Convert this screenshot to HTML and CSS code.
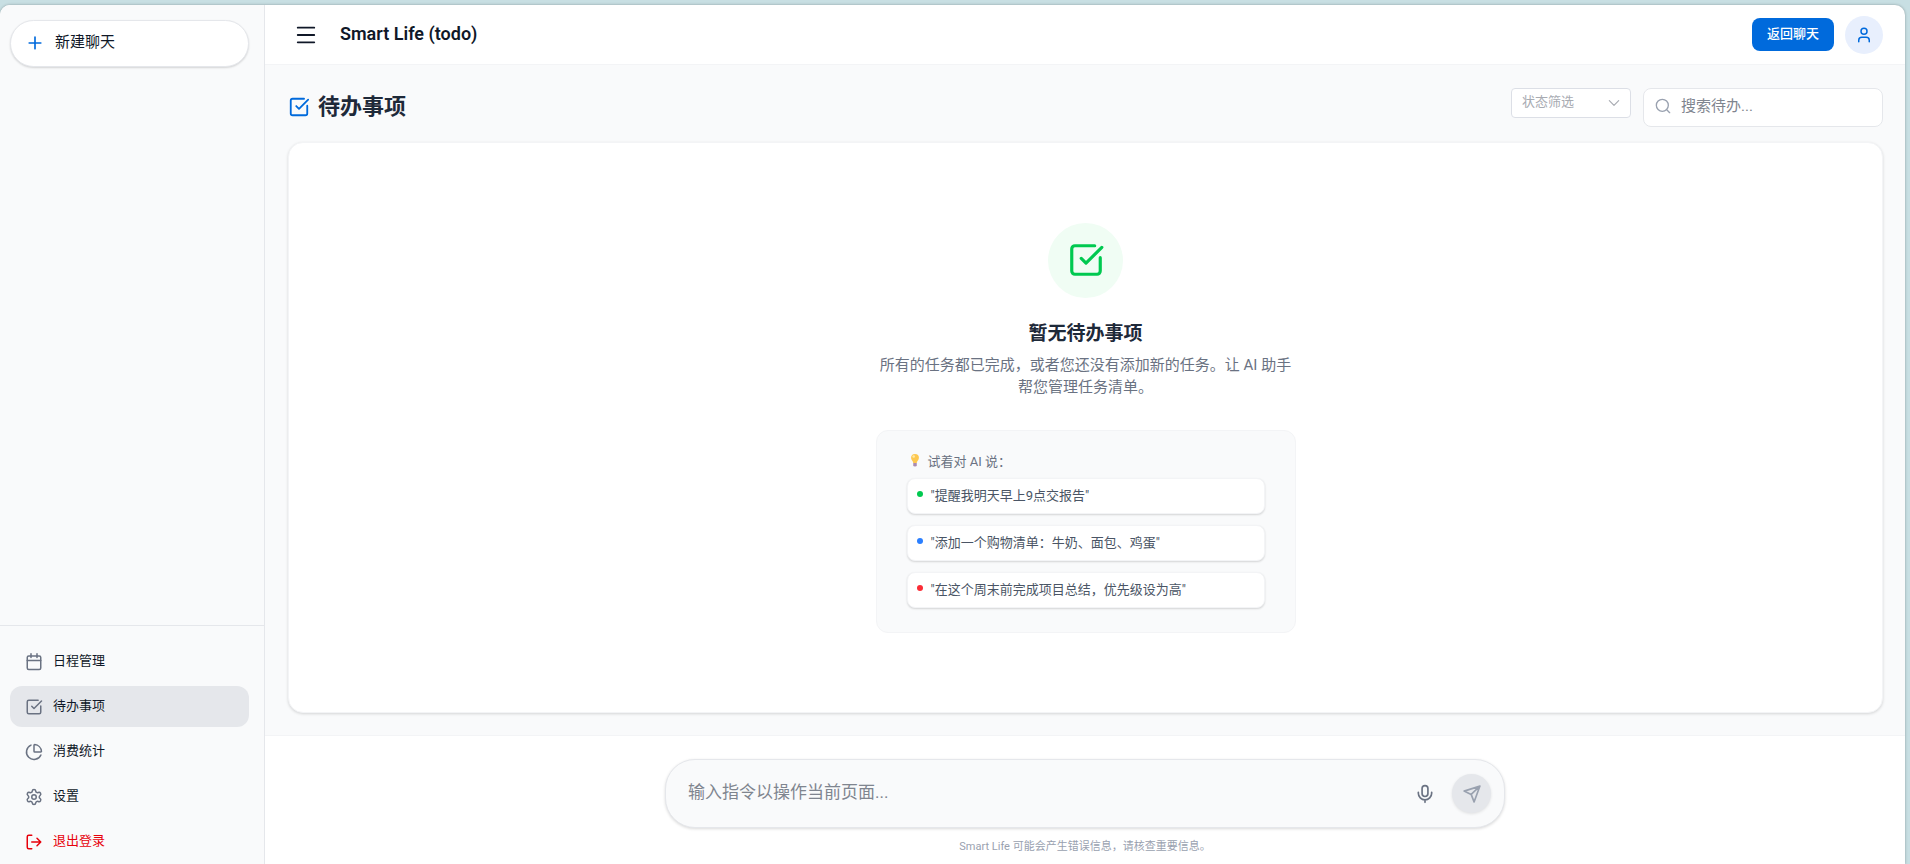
FILE: index.html
```
<!DOCTYPE html>
<html lang="zh-CN">
<head>
  <meta charset="UTF-8" />
  <meta name="viewport" content="width=device-width, initial-scale=1.0" />
  <title>Smart Life</title>
  <link rel="stylesheet" href="styles.css">
</head>
<body>
  <!-- Shared icon shapes -->
  <svg class="icon-defs" aria-hidden="true">
    <symbol id="icon-todo" viewBox="0 0 24 24">
      <path d="M21 10.5V19a2 2 0 0 1-2 2H5a2 2 0 0 1-2-2V5a2 2 0 0 1 2-2h12.5" />
      <path d="m9 11 3 3L22 4" />
    </symbol>
  </svg>

  <div class="app">
    <aside class="sidebar">
      <button type="button" class="new-chat">
        <svg class="icon icon-md" viewBox="0 0 24 24"><path d="M5 12h14M12 5v14" /></svg>
        <span>新建聊天</span>
      </button>

      <nav class="side-nav">
        <a href="#" class="nav-item">
          <svg class="icon" viewBox="0 0 24 24"><path d="M8 1v5M16 1v5M3 10h18" /><rect x="3" y="4" width="18" height="18" rx="2" /></svg>
          <span>日程管理</span>
        </a>
        <a href="#" class="nav-item active">
          <svg class="icon"><use href="#icon-todo" /></svg>
          <span>待办事项</span>
        </a>
        <a href="#" class="nav-item">
          <svg class="icon" viewBox="0 0 24 24"><path d="M21 12c.55 0 1-.45.95-1a10 10 0 0 0-8.95-8.95c-.55-.05-1 .4-1 .95v8a1 1 0 0 0 1 1z" /><path d="M21.2 15.9A10 10 0 1 1 8 2.83" /></svg>
          <span>消费统计</span>
        </a>
        <a href="#" class="nav-item">
          <svg class="icon" viewBox="0 0 24 24"><path d="M9.67 4.14a2.34 2.34 0 0 1 4.66 0 2.34 2.34 0 0 0 3.32 1.91 2.34 2.34 0 0 1 2.33 4.04 2.34 2.34 0 0 0 0 3.82 2.34 2.34 0 0 1-2.33 4.04 2.34 2.34 0 0 0-3.32 1.91 2.34 2.34 0 0 1-4.66 0 2.34 2.34 0 0 0-3.32-1.91 2.34 2.34 0 0 1-2.33-4.04 2.34 2.34 0 0 0 0-3.82 2.34 2.34 0 0 1 2.33-4.04 2.34 2.34 0 0 0 3.32-1.91" /><circle cx="12" cy="12" r="3" /></svg>
          <span>设置</span>
        </a>
        <a href="#" class="nav-item logout">
          <svg class="icon" viewBox="0 0 24 24"><path d="M9 21H5a2 2 0 0 1-2-2V5a2 2 0 0 1 2-2h4M16 17l5-5-5-5M21 12H9" /></svg>
          <span>退出登录</span>
        </a>
      </nav>
    </aside>

    <main class="main">
      <header class="topbar">
        <button type="button" class="menu-btn" aria-label="菜单">
          <svg class="icon icon-lg" viewBox="0 0 24 24"><path d="M3 4h18M3 12h18M3 20h18" /></svg>
        </button>
        <h1>Smart Life (todo)</h1>
        <button type="button" class="back-btn">返回聊天</button>
        <button type="button" class="avatar" aria-label="用户">
          <svg class="icon" viewBox="0 0 24 24"><path d="M19 21v-2a4 4 0 0 0-4-4H9a4 4 0 0 0-4 4v2" /><circle cx="12" cy="7" r="4" /></svg>
        </button>
      </header>

      <section class="content">
        <div class="page-head">
          <svg class="icon icon-lg icon-page"><use href="#icon-todo" /></svg>
          <h2>待办事项</h2>
          <div class="filters">
            <div class="status-filter">
              <select aria-label="状态筛选">
                <option>状态筛选</option>
                <option>待完成</option>
                <option>已完成</option>
              </select>
              <svg class="icon icon-arrow" viewBox="0 0 24 24"><path d="m4 8 8 8 8-8" /></svg>
            </div>
            <label class="search">
              <svg class="icon" viewBox="0 0 24 24"><circle cx="11" cy="11" r="9" /><path d="m22 22-4-4" /></svg>
              <input type="text" placeholder="搜索待办..." aria-label="搜索待办" />
            </label>
          </div>
        </div>

        <div class="card">
          <div class="empty">
            <div class="empty-icon">
              <svg class="icon"><use href="#icon-todo" /></svg>
            </div>
            <h3>暂无待办事项</h3>
            <p class="empty-text">所有的任务都已完成，或者您还没有添加新的任务。让 AI 助手帮您管理任务清单。</p>

            <div class="tips">
              <p class="tips-title">
                <svg class="bulb" viewBox="0 0 16 16">
                  <path d="M8 1a4.500 4.500 0 0 0-4.500 4.500c0 2.500 2.200 3.500 2.500 6h4c.3-2.500 2.500-3.500 2.500-6A4.500 4.500 0 0 0 8 1z" fill="#fdc850" />
                  <circle cx="6.500" cy="4" r="1.500" fill="#ffe9a8" />
                  <path d="M6 11.500h4v2.500a2 1.500 0 0 1-4 0z" fill="#a98bb0" />
                </svg>
                试着对 AI 说：
              </p>
              <ul>
                <li class="green">"提醒我明天早上9点交报告"</li>
                <li class="blue">"添加一个购物清单：牛奶、面包、鸡蛋"</li>
                <li class="red">"在这个周末前完成项目总结，优先级设为高"</li>
              </ul>
            </div>
          </div>
        </div>
      </section>

      <footer class="composer-area">
        <form class="composer">
          <input type="text" placeholder="输入指令以操作当前页面..." aria-label="输入指令" />
          <button type="button" class="mic-btn" aria-label="语音输入">
            <svg class="icon icon-md" viewBox="0 0 24 24"><path d="M12 19v3M20 10v1a8 8 0 0 1-16 0v-1" /><rect x="8.500" y="2" width="7" height="13" rx="3.500" /></svg>
          </button>
          <button type="button" class="send-btn" aria-label="发送">
            <svg class="icon icon-md" viewBox="0 0 24 24"><path d="M21.500 2.500 2.500 8.500l8.500 4 3.500 9zM21.500 2.500 11 12.500" /></svg>
          </button>
        </form>
        <p class="disclaimer">Smart Life 可能会产生错误信息，请核查重要信息。</p>
      </footer>
    </main>
  </div>
</body>
</html>
```

FILE: styles.css
```
* {
  box-sizing: border-box;
}
body {
  margin: 0;
  height: 100vh;
  padding: 5px 5px 0 0;
  overflow: hidden;
  background-color: #c8dfe3;
  color: #101828;
  font-family: Roboto, "Noto Sans CJK SC", sans-serif;
  font-size: 14px;
}
h1, h2, h3, p, ul {
  margin: 0;
  padding: 0;
}
button, input, select {
  font: inherit;
  color: inherit;
}
button {
  display: flex;
  align-items: center;
  justify-content: center;
  padding: 0;
  border: none;
  cursor: pointer;
}
.icon-defs {
  display: none;
}
.icon {
  flex: none;
  width: 18px;
  height: 18px;
  fill: none;
  stroke: currentColor;
  stroke-width: 2;
  stroke-linecap: round;
  stroke-linejoin: round;
}
.icon-md {
  width: 20px;
  height: 20px;
}
.icon-lg {
  width: 22px;
  height: 22px;
}
.app {
  display: flex;
  height: 100%;
  overflow: hidden;
  background-color: #fff;
  border-radius: 10px 10px 0 0;
  box-shadow: 0 0 3px rgba(0, 0, 0, 0.3);
}

/* Sidebar */
.sidebar {
  display: flex;
  flex-direction: column;
  flex: none;
  width: 265px;
  background-color: #f9fafb;
  border-right: 1px solid #e5e7eb;
}
.new-chat {
  justify-content: flex-start;
  gap: 10px;
  height: 47px;
  margin: 15px 15px 0 10px;
  padding: 0 14px 2px;
  font-size: 15px;
  background-color: #fff;
  border: 1px solid #e5e7eb;
  border-radius: 24px;
  box-shadow: 0 1px 2px rgba(0, 0, 0, 0.15);
}
.new-chat .icon {
  color: #006adc;
}
.new-chat span,
.nav-item span {
  padding-bottom: 4px;
}
.side-nav {
  display: flex;
  flex-direction: column;
  gap: 4px;
  margin-top: auto;
  padding: 15px 15px 2px 10px;
  border-top: 1px solid #e5e7eb;
}
.nav-item {
  display: flex;
  align-items: center;
  gap: 10px;
  height: 41px;
  padding: 0 15px;
  font-size: 13px;
  color: #101828;
  text-decoration: none;
  border-radius: 12px;
}
.nav-item .icon {
  color: #6a7282;
}
.nav-item.active {
  background-color: #e5e7eb;
}
.nav-item.logout,
.nav-item.logout .icon {
  color: #e7000b;
}

/* Top bar */
.main {
  display: flex;
  flex-direction: column;
  flex: 1;
  min-width: 0;
}
.topbar {
  display: flex;
  align-items: center;
  flex: none;
  height: 60px;
  padding: 0 22px 0 30px;
  border-bottom: 1px solid #f3f4f6;
}
.menu-btn {
  background: none;
}
.topbar h1 {
  margin: 0 auto 0 23px;
  padding-bottom: 2px;
  font-size: 18px;
  font-weight: 600;
}
.back-btn {
  height: 33px;
  margin-right: 11px;
  padding: 0 15px 4px;
  font-size: 13px;
  font-weight: 500;
  color: #fff;
  background-color: #006adc;
  border-radius: 8px;
}
.avatar {
  width: 38px;
  height: 38px;
  color: #006adc;
  background-color: #e8effd;
  border-radius: 50%;
}

/* Page content */
.content {
  display: flex;
  flex-direction: column;
  flex: 1;
  padding: 22px 22px 22px 23px;
  background-color: #f9fafb;
}
.page-head {
  display: flex;
  align-items: center;
  gap: 8px;
  height: 40px;
  margin-bottom: 15px;
}
.icon-page {
  color: #006adc;
}
.page-head h2 {
  padding-bottom: 6px;
  font-size: 22px;
  font-weight: 700;
  color: #1e2939;
}
.filters {
  display: flex;
  align-items: flex-start;
  gap: 12px;
  margin-left: auto;
}
.status-filter {
  display: grid;
  align-items: center;
  width: 120px;
  height: 30px;
}
.status-filter select,
.status-filter .icon {
  grid-area: 1 / 1;
}
.status-filter select {
  width: 100%;
  height: 30px;
  padding: 0 10px 2px;
  appearance: none;
  font-size: 13px;
  color: #a8abb2;
  background-color: #fff;
  border: 1px solid #dcdfe6;
  border-radius: 4px;
}
.icon-arrow {
  justify-self: end;
  width: 14px;
  height: 14px;
  margin-right: 10px;
  color: #a8abb2;
  pointer-events: none;
}
.search {
  display: flex;
  align-items: center;
  gap: 10px;
  width: 240px;
  height: 39px;
  padding: 0 11px 2px;
  color: #99a1af;
  background-color: #fff;
  border: 1px solid #e5e7eb;
  border-radius: 8px;
}
.search .icon {
  width: 16px;
  height: 16px;
}
.search input {
  flex: 1;
  min-width: 0;
  padding: 0;
  font-size: 15px;
  color: #101828;
  background: none;
  border: none;
  outline: none;
}
::placeholder {
  color: #7f858f;
}
.card {
  display: flex;
  align-items: center;
  justify-content: center;
  flex: 1;
  background-color: #fff;
  border: 1px solid #f3f4f6;
  border-radius: 15px;
  box-shadow: 0 1px 3px rgba(0, 0, 0, 0.15);
}
.empty {
  display: flex;
  flex-direction: column;
  align-items: center;
  width: 420px;
}
.empty-icon {
  display: flex;
  align-items: center;
  justify-content: center;
  width: 75px;
  height: 75px;
  margin-bottom: 22px;
  color: #00c950;
  background-color: #f0fdf4;
  border-radius: 50%;
}
.empty-icon .icon {
  width: 38px;
  height: 38px;
}
.empty h3 {
  margin-bottom: 7px;
  font-size: 19px;
  line-height: 27px;
  color: #1e2939;
}
.empty-text {
  margin-bottom: 32px;
  font-size: 15px;
  line-height: 22px;
  color: #6a7282;
  text-align: center;
}
.tips {
  width: 100%;
  padding: 20px 30px 24px;
  font-size: 13px;
  background-color: #f9fafb;
  border: 1px solid #f3f4f6;
  border-radius: 12px;
}
.tips-title {
  display: flex;
  align-items: center;
  gap: 5px;
  height: 19px;
  margin-bottom: 8px;
  color: #6a7282;
}
.bulb {
  width: 16px;
  height: 14px;
}
.tips ul {
  display: flex;
  flex-direction: column;
  gap: 11px;
  list-style: none;
}
.tips li {
  display: flex;
  align-items: center;
  gap: 8px;
  height: 36px;
  padding: 0 9px 3px;
  color: #4a5565;
  background-color: #fff;
  border: 1px solid #f3f4f6;
  border-radius: 8px;
  box-shadow: 0 1px 2px rgba(0, 0, 0, 0.15);
}
.tips li::before {
  content: "";
  width: 6px;
  height: 6px;
  border-radius: 50%;
}
.tips .green::before {
  background-color: #00c950;
}
.tips .blue::before {
  background-color: #2b7fff;
}
.tips .red::before {
  background-color: #fb2c36;
}

/* Composer */
.composer-area {
  display: flex;
  flex-direction: column;
  align-items: center;
  flex: none;
  padding: 23px 22px 10px;
  border-top: 1px solid #f3f4f6;
}
.composer {
  display: flex;
  align-items: center;
  width: 100%;
  max-width: 840px;
  height: 69px;
  padding: 0 13px 0 22px;
  background-color: #f9fafb;
  border: 1px solid #e5e7eb;
  border-radius: 30px;
  box-shadow: 0 1px 3px rgba(0, 0, 0, 0.15);
}
.composer input {
  flex: 1;
  min-width: 0;
  padding: 0 0 4px;
  font-size: 17px;
  background: none;
  border: none;
  outline: none;
}
.mic-btn {
  width: 38px;
  height: 38px;
  margin-right: 8px;
  color: #6a7282;
  background: none;
}
.send-btn {
  width: 39px;
  height: 39px;
  color: #99a1af;
  background-color: #e5e7eb;
  border-radius: 50%;
  box-shadow: 0 1px 3px rgba(0, 0, 0, 0.1);
}
.disclaimer {
  margin-top: 11px;
  font-size: 11px;
  line-height: 15px;
  color: #99a1af;
}
```
